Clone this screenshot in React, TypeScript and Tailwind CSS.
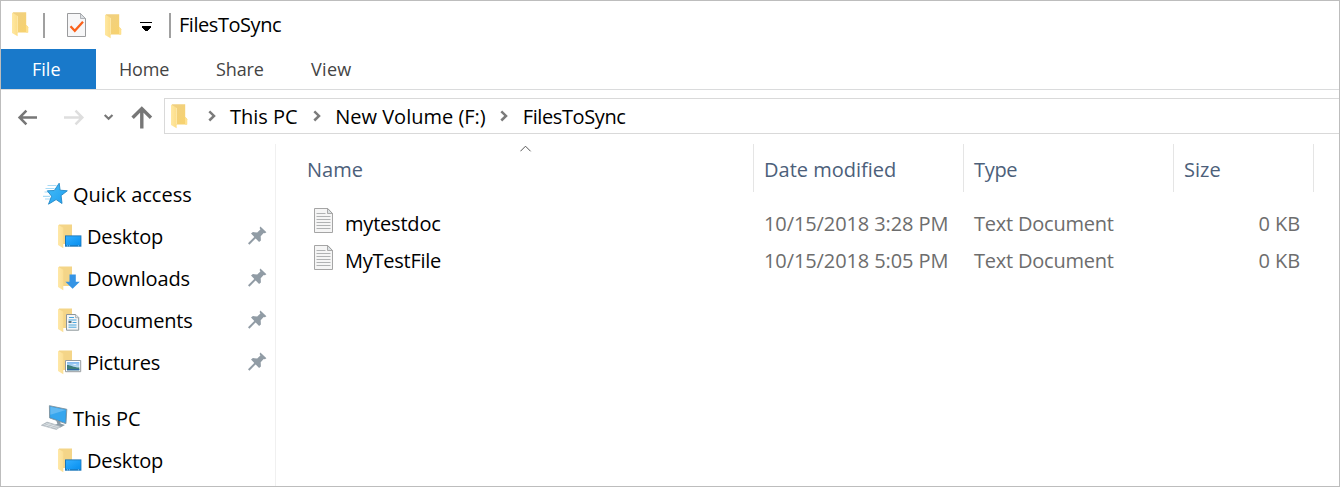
import React from "react";

type Badge = "desktop" | "download" | "document" | "picture";

function Folder({ className = "" }: { className?: string }) {
  return (
    <svg width="17" height="25" viewBox="0 0 17 25" className={`shrink-0 ${className}`}>
      <defs>
        <linearGradient id="fback" x1="0" y1="0" x2="1" y2="1">
          <stop offset="0" stopColor="#efd084" />
          <stop offset="1" stopColor="#f8d26c" />
        </linearGradient>
        <linearGradient id="ffront" x1="0" y1="0" x2="1" y2="0">
          <stop offset="0" stopColor="#ffe8a2" />
          <stop offset="1" stopColor="#fcdd87" />
        </linearGradient>
      </defs>
      <path d="M1 .3H14.2V13l1.8 1.8V20.5H1Z" fill="url(#fback)" />
      <path d="M14 13.6h.8l1.5 1.6V20.5H14Z" fill="#fee08d" />
      <path d="M0 .6 5.6 3.7V24.3L0 21Z" fill="url(#ffront)" />
      <path d="M5.4 4V20" stroke="#ffecb5" strokeWidth=".8" />
    </svg>
  );
}

function BadgeFolder({ badge }: { badge: Badge }) {
  return (
    <svg width="25" height="25" viewBox="0 0 25 25" className="shrink-0">
      <defs>
        <linearGradient id="bfront" x1="0" y1="0" x2="1" y2="0">
          <stop offset="0" stopColor="#ffe8a8" />
          <stop offset="1" stopColor="#fbdf94" />
        </linearGradient>
        <linearGradient id="screen" x1="0" y1="0" x2="1" y2="1">
          <stop offset="0" stopColor="#32aeff" />
          <stop offset="1" stopColor="#078fef" />
        </linearGradient>
        <linearGradient id="sky" x1="0" y1="0" x2="0" y2="1">
          <stop offset="0" stopColor="#80b8ef" />
          <stop offset="1" stopColor="#e4f3f4" />
        </linearGradient>
      </defs>
      <path d="M1 .5H14V13l2 2V20H1Z" fill="#f4d588" />
      <path d="M0 .8 5.3 3.7V24.3L0 21Z" fill="url(#bfront)" />
      {badge === "desktop" && (
        <>
          <path d="M7 11.4h16.4v11.3H7Z" fill="#1976b9" />
          <path d="M8 12.3h14.6v9H8Z" fill="url(#screen)" />
          <path d="M9 21.9h1m1 0h1m8 0h1" stroke="#a1d7ff" strokeWidth=".8" />
        </>
      )}
      {badge === "download" && <path d="M11.5 8.5h6.3v7.3h4L14.6 22.8 7.4 15.8h4.1Z" fill="#3594e5" />}
      {badge === "document" && (
        <>
          <path d="M8.5 6.5h9.2l3 3v12.7H8.5Z" fill="#f5f6f7" stroke="#8c9599" />
          <path d="M17.5 6.5v3.2h3.2" fill="#dce3e8" stroke="#98a0a4" strokeWidth=".7" />
          <path d="M11 9.5h5M10.5 12h8M14.5 14.5h4M10.5 17h8M10.5 19.2h8" stroke="#48a5dc" />
          <path d="M10.5 14h3" stroke="#5b7482" strokeWidth="2" />
        </>
      )}
      {badge === "picture" && (
        <>
          <path d="M7.5 10.5h15.2v11.2H7.5Z" fill="#fff" stroke="#969ca0" />
          <path d="M9 12h12.3v8.3H9Z" fill="url(#sky)" />
          <path d="M9 15c4 0 6 2.5 12.3 2.5v2.8H9Z" fill="#3d7d79" />
          <path d="M9 19h12.3v1.3H9Z" fill="#2c65a0" />
          <path d="M14 15l3-1 2 1Z" fill="#f4fafc" />
        </>
      )}
    </svg>
  );
}

function TaskPage() {
  return (
    <svg width="21" height="26" viewBox="0 0 21 26" className="shrink-0">
      <path d="M1.5 1.5h13l5 5v18h-18Z" fill="#f7f7f8" stroke="#9a9b9d" />
      <path d="M14.5 1.5v5h5Z" fill="#dbdfe3" stroke="#a2a5a8" strokeWidth=".8" />
      <path d="M4.5 14.2 8.8 18.7l8.2-9" fill="none" stroke="#fa611b" strokeWidth="2.3" />
    </svg>
  );
}

function TextPage() {
  return (
    <svg width="20" height="26" viewBox="0 0 20 26" className="shrink-0">
      <path d="M.5.5h13.3l4.7 5v19H.5Z" fill="#f5f5f5" stroke="#a5a5a5" />
      <path d="M13.5.5v5h5Z" fill="#dce1e3" stroke="#999" strokeWidth=".8" />
      <path d="M2.5 5.5h9M2.5 8.5h14M2.5 11.5h14M2.5 14.5h14M2.5 17.5h14M2.5 20.5h14" stroke="#b0b2b3" />
    </svg>
  );
}

function Star() {
  return (
    <svg width="26" height="24" viewBox="0 0 26 24" className="shrink-0">
      <defs>
        <linearGradient id="starblue" x1="0" y1="0" x2="1" y2="1">
          <stop offset="0" stopColor="#45bdf7" />
          <stop offset="1" stopColor="#1e9df0" />
        </linearGradient>
      </defs>
      <path d="M4.5 3.5h9M2.5 6.5h9M1.5 10h7M0 14.3h7M2 17h6" stroke="#a8daf5" strokeWidth="1.2" />
      <path d="m16.2 1.2.9 7 7.2.6-6.2 4.8.9 7.9-5.9-3.9-7.6 4.6 3.1-8-4.3-5.4 7-.3Z" fill="url(#starblue)" stroke="#2288c6" strokeWidth=".9" />
    </svg>
  );
}

function Computer() {
  return (
    <svg width="27" height="26" viewBox="0 0 27 26" className="shrink-0">
      <path d="m15 15 4.5 1.2v2.4l4.5 1.4-4.6 2.4-6-2 3-1.7Z" fill="#8a9ba6" />
      <path d="m8.4.7 17.4 3.6-.9 14.3L8.6 12.9Z" fill="#3293d3" stroke="#8299a7" />
      <path d="m9.3 1.7 15.6 3.2-.9 12.5L9.4 12.2Z" fill="#36a6ee" />
      <path d="m9.3 1.7 15.6 3.2L9.4 9.8Z" fill="#62b9f2" />
      <path d="m6 17.1 14 4.2-4.6 3.2L.4 20.3Z" fill="#b8c1c7" stroke="#98a3aa" strokeWidth=".5" />
      <path d="m4.7 18.2 13.2 3.9M2.6 19.4l13.7 4M9.5 18.4l-5 3m9-1.8-5 3" stroke="#e2e7ea" strokeWidth=".7" />
    </svg>
  );
}

function Pin() {
  return (
    <svg width="19" height="19" viewBox="0 0 19 19" className="shrink-0">
      <path d="m12.4.5 6 5.8-1.5.9-1.2-.2-3 3.2.2 4.3-1.8 1.5L3 7.6l1.9-1.5 4.3.5 3.2-3.1-.8-1.5Z" fill="#919ca5" />
      <path d="m7.7 11-7 7" stroke="#919ca5" strokeWidth="2" />
    </svg>
  );
}

function Chevron() {
  return (
    <svg width="9" height="12" viewBox="0 0 9 12" className="shrink-0">
      <path d="m1.3 1.3 4.7 4.6-4.7 4.6" fill="none" stroke="#7b7b7b" strokeWidth="2.5" />
    </svg>
  );
}

const places: { name: string; badge: Badge; spacing: string }[] = [
  { name: "Desktop", badge: "desktop", spacing: "tracking-[-0.15px]" },
  { name: "Downloads", badge: "download", spacing: "tracking-[-0.15px]" },
  { name: "Documents", badge: "document", spacing: "tracking-[-0.15px]" },
  { name: "Pictures", badge: "picture", spacing: "tracking-[-0.25px]" },
];

function Place({ name, badge, spacing, pinned = true }: { name: string; badge: Badge; spacing: string; pinned?: boolean }) {
  return (
    <div className="flex h-[42px] items-center pl-[57px] pr-[8px]">
      <span className="-mt-[2px]"><BadgeFolder badge={badge} /></span>
      <span className={`ml-[4px] ${spacing}`}>{name}</span>
      {pinned && <span className="ml-auto -mt-[4px]"><Pin /></span>}
    </div>
  );
}

const files = [
  { name: "mytestdoc", date: "10/15/2018 3:28 PM", spacing: "tracking-[-0.2px]" },
  { name: "MyTestFile", date: "10/15/2018 5:05 PM", spacing: "tracking-[-0.25px]" },
];

export default function App() {
  return (
    <div className="flex h-[487px] w-[1340px] flex-col overflow-hidden whitespace-nowrap border border-[#bdbdbd] bg-white font-['Open_Sans','Noto_Sans',sans-serif] text-[20px] leading-[26px] text-black">
      <header className="flex h-[48px] shrink-0 items-center pl-[11px]">
        <Folder className="-mt-[2px]" />
        <span className="ml-[14px] h-[25px] w-[2px] bg-[#a0a0a0]" />
        <span className="ml-[21px]"><TaskPage /></span>
        <Folder className="ml-[18px] mt-[2px]" />
        <svg width="13" height="10" viewBox="0 0 13 10" className="ml-[18px] mt-[4px] shrink-0">
          <path d="M0 0h12v1H0ZM2 4h8.5v1.5L7.5 9H5L2 5.5Z" fill="#000" shapeRendering="crispEdges" />
        </svg>
        <span className="ml-[16px] h-[25px] w-[2px] bg-[#a0a0a0]" />
        <span className="ml-[8px] tracking-[-0.45px]">FilesToSync</span>
      </header>

      <nav className="flex h-[41px] shrink-0 border-b border-[#dadbdc] text-[18px] text-[#444]">
        <div className="flex w-[95px] items-center bg-[#1979ca] pl-[31px] text-white">File</div>
        <div className="flex w-[97px] items-center pl-[23px] tracking-[-0.2px]">Home</div>
        <div className="flex w-[95px] items-center pl-[23px] tracking-[-0.1px]">Share</div>
        <div className="flex items-center pl-[23px] tracking-[0.3px]">View</div>
      </nav>

      <div className="flex h-[54px] shrink-0">
        <div className="flex w-[163px] items-center">
          <svg width="147" height="24" viewBox="0 0 147 24" className="ml-[16px] shrink-0" fill="none">
            <path d="M1.8 12.5h18.2M9.4 5.7 2.6 12.5l6.8 6.8" stroke="#777" strokeWidth="2.5" />
            <path d="M47 12.5h18M58.5 5.7 65.3 12.5l-6.8 6.8" stroke="#dedede" strokeWidth="2.5" />
            <path d="m87.7 10 3.9 3.7 3.9-3.7" stroke="#777" strokeWidth="2.2" />
            <path d="M124.8 3.5v20M115.6 12.8l9.2-9.2 9.2 9.2" stroke="#777" strokeWidth="3.4" />
          </svg>
        </div>
        <div className="mt-[8px] flex h-[36px] flex-1 items-center border border-r-0 border-[#d9d9d9] pl-[6px]">
          <Folder />
          <span className="ml-[20px]"><Chevron /></span>
          <span className="ml-[13px] pt-[1px]">This PC</span>
          <span className="ml-[15px]"><Chevron /></span>
          <span className="ml-[13.5px] pt-[1px]">New Volume (F:)</span>
          <span className="ml-[14px]"><Chevron /></span>
          <span className="ml-[14px] pt-[1px] tracking-[-0.4px]">FilesToSync</span>
        </div>
      </div>

      <main className="flex min-h-0 flex-1">
        <aside className="w-[275px] shrink-0 border-r border-[#f0f0f0] pt-[30px]">
          <div className="flex h-[42px] items-center pl-[42px]">
            <span className="-mt-[2px]"><Star /></span>
            <span className="ml-[4px]">Quick access</span>
          </div>
          {places.map((place) => <Place key={place.name} {...place} />)}
          <div className="mt-[14px] flex h-[42px] items-center pl-[40px]">
            <span className="-mt-[3px]"><Computer /></span>
            <span className="ml-[5px]">This PC</span>
          </div>
          <Place name="Desktop" badge="desktop" spacing="tracking-[-0.15px]" pinned={false} />
        </aside>

        <section className="flex-1">
          <div className="grid h-[48px] grid-cols-[478px_210px_210px_140px] text-[#4c607a]">
            <div className="relative flex items-center border-r border-[#e5e5e5] pl-[31px] pt-[4px]">
              <span>Name</span>
              <svg width="12" height="7" viewBox="0 0 12 7" className="absolute left-[244px] top-[1px]">
                <path d="m.4 6.3 5.1-5.1 5.1 5.1" fill="none" stroke="#555" />
              </svg>
            </div>
            <div className="flex items-center border-r border-[#e5e5e5] pl-[10px] pt-[4px]"><span>Date modified</span></div>
            <div className="flex items-center border-r border-[#e5e5e5] pl-[10px] pt-[4px]"><span className="tracking-[-0.3px]">Type</span></div>
            <div className="flex items-center border-r border-[#e5e5e5] pl-[10px] pt-[4px]"><span>Size</span></div>
          </div>
          <div className="pt-[13px]">
            {files.map((file) => (
              <div key={file.name} className="grid h-[37px] grid-cols-[478px_210px_210px_140px] items-center text-[#6d6d6d]">
                <div className="flex items-center pl-[38px] text-black">
                  <span className="-mt-[5px]"><TextPage /></span>
                  <span className={`ml-[11px] ${file.spacing}`}>{file.name}</span>
                </div>
                <span className="pl-[10px] tracking-[-0.1px]">{file.date}</span>
                <span className="pl-[10px] tracking-[-0.22px]">Text Document</span>
                <span className="pr-[14px] text-right tracking-[-0.1px]">0 KB</span>
              </div>
            ))}
          </div>
        </section>
      </main>
    </div>
  );
}
